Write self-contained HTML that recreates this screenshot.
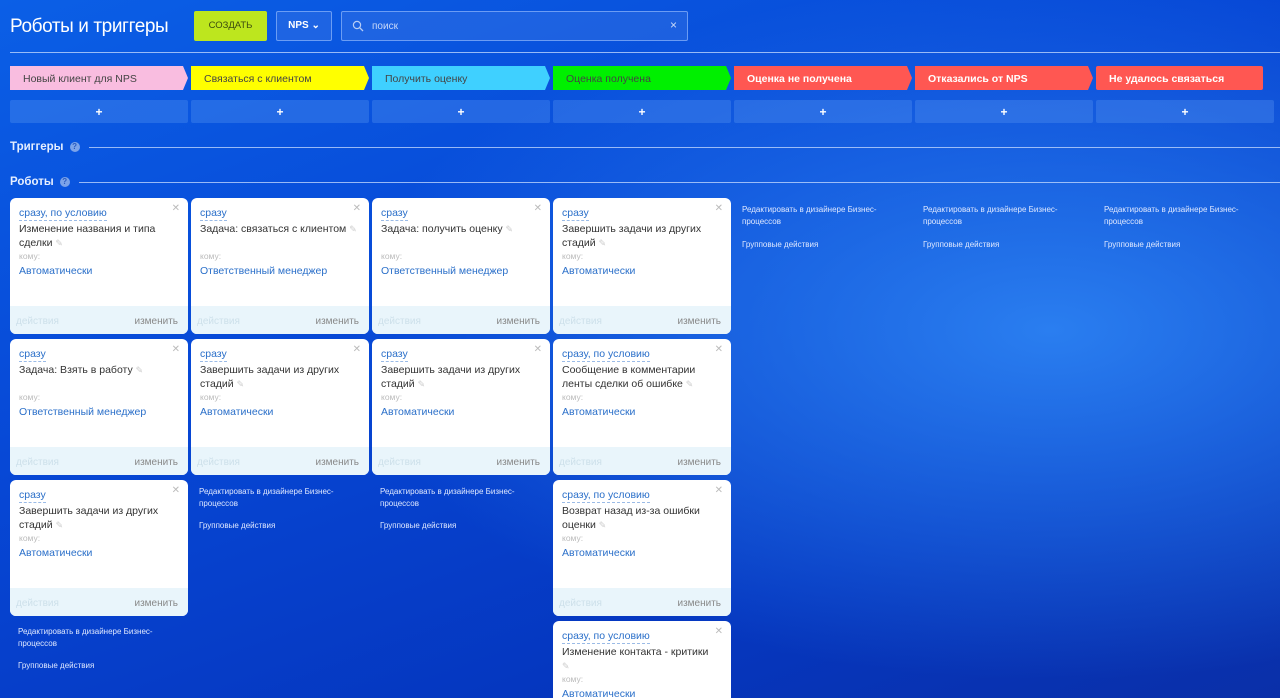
<!DOCTYPE html>
<html><head><meta charset="utf-8"><style>
*{margin:0;padding:0;box-sizing:border-box}
html{width:1280px;height:698px;overflow:hidden}
body{width:1280px;height:698px;overflow:hidden;font-family:"Liberation Sans",sans-serif;position:relative;
background:radial-gradient(ellipse 700px 350px at 1050px 330px,#2a7ef0 0%,rgba(30,110,235,0) 100%),linear-gradient(160deg,#0b5fe6 0%,#0748d6 40%,#0537c0 75%,#0a2fa8 100%);}
.a{position:absolute}
h1{position:absolute;left:10px;top:16px;font-weight:normal;font-size:19px;color:#fff;letter-spacing:-.4px}
.btn{position:absolute;top:11px;height:30px;border-radius:2px}
.hr{position:absolute;height:1px;background:rgba(200,220,255,.75)}
.st{position:absolute;top:66px;height:24px;font-size:10.5px;line-height:26px;padding-left:13px;clip-path:polygon(0 0,calc(100% - 5px) 0,100% 50%,calc(100% - 5px) 100%,0 100%)}
.pl{position:absolute;top:100px;height:23px;width:178px;background:rgba(90,150,240,.35);color:#fff;text-align:center;font-size:12px;line-height:24px;font-weight:bold;border-radius:2px}
.card{position:absolute;width:178px;height:136px;background:#fff;border-radius:6px;overflow:hidden}
.card .w{position:absolute;left:9px;top:9px;font-size:10.5px;color:#2a6fc9;border-bottom:1px dashed #9bbbe6;line-height:13px}
.card .x{position:absolute;right:8px;top:5px;font-size:10px;color:#bbb}
.card .t{position:absolute;left:9px;top:24px;width:160px;font-size:10.5px;line-height:14px;color:#333}
.card .t i{color:#ccc;font-style:normal;font-size:9px}
.card .k{position:absolute;left:9px;top:53px;font-size:8.5px;color:#bbb}
.card .v{position:absolute;left:9px;top:67px;font-size:10.5px;color:#2a6fc9}
.card .f{position:absolute;left:0;bottom:0;width:100%;height:28px;background:#e9f5fb}
.card .f span{position:absolute;top:10px;font-size:10px}
.lk{position:absolute;font-size:8px;color:#dfe8ff;line-height:12px;width:150px}
.sec{position:absolute;left:10px;font-size:11.5px;font-weight:bold;color:#e6efff}
.q{display:inline-block;width:10px;height:10px;border-radius:50%;background:rgba(200,215,240,.6);color:#2a5bc0;font-size:8px;text-align:center;line-height:10px;margin-left:6px;vertical-align:1px}
</style></head><body>
<h1>Роботы и триггеры</h1>
<div class="btn" style="left:194px;width:73px;background:#bde61e;color:#3b4a10;font-size:9.5px;text-align:center;line-height:30px">СОЗДАТЬ</div>
<div class="btn" style="left:276px;width:56px;border:1px solid rgba(160,195,255,.6);background:rgba(60,120,230,.4);color:#fff;font-size:10px;font-weight:bold;text-align:center;line-height:28px">NPS ⌄</div>
<div class="btn" style="left:341px;width:347px;border:1px solid rgba(160,195,255,.6);background:rgba(60,120,230,.4);">
<svg class="a" style="left:10px;top:8px" width="12" height="12" viewBox="0 0 12 12"><circle cx="5" cy="5" r="3.6" fill="none" stroke="#b7cdf5" stroke-width="1.2"/><path d="M7.6 7.6L11 11" stroke="#b7cdf5" stroke-width="1.3"/></svg>
<span class="a" style="left:30px;top:9px;font-size:10px;color:#c9d9f8">поиск</span>
<span class="a" style="right:10px;top:6px;font-size:12px;color:#c9d9f8">×</span></div>
<div class="hr" style="left:10px;top:52px;width:1270px"></div>

<div class="st" style="left:10px;width:178px;background:#f9bde0;color:#444">Новый клиент для NPS</div>
<div class="st" style="left:191px;width:178px;background:#ffff00;color:#444">Связаться с клиентом</div>
<div class="st" style="left:372px;width:178px;background:#3fd0ff;color:#444">Получить оценку</div>
<div class="st" style="left:553px;width:178px;background:#00f000;color:#444">Оценка получена</div>
<div class="st" style="left:734px;width:178px;background:#ff5752;color:#fff;font-weight:bold">Оценка не получена</div>
<div class="st" style="left:915px;width:178px;background:#ff5752;color:#fff;font-weight:bold">Отказались от NPS</div>
<div class="st" style="left:1096px;width:167px;background:#ff5752;color:#fff;font-weight:bold;clip-path:none;border-radius:2px">Не удалось связаться</div>

<div class="pl" style="left:10px">+</div><div class="pl" style="left:191px">+</div><div class="pl" style="left:372px">+</div><div class="pl" style="left:553px">+</div><div class="pl" style="left:734px">+</div><div class="pl" style="left:915px">+</div><div class="pl" style="left:1096px">+</div>

<div class="sec" style="top:141px">Триггеры<span class="q">?</span></div>
<div class="hr" style="left:89px;top:147px;width:1191px"></div>
<div class="sec" style="top:176px">Роботы<span class="q">?</span></div>
<div class="hr" style="left:79px;top:182px;width:1201px"></div>

<div class="card" style="left:10px;top:198px"><span class="w">сразу, по условию</span><span class="x">✕</span><div class="t">Изменение названия и типа сделки <i>✎</i></div><div class="k">кому:</div><div class="v">Автоматически</div><div class="f"><span style="left:6px;color:#cde0ea">действия</span><span style="right:10px;color:#888">изменить</span></div></div>
<div class="card" style="left:191px;top:198px"><span class="w">сразу</span><span class="x">✕</span><div class="t">Задача: связаться с клиентом <i>✎</i></div><div class="k">кому:</div><div class="v">Ответственный менеджер</div><div class="f"><span style="left:6px;color:#cde0ea">действия</span><span style="right:10px;color:#888">изменить</span></div></div>
<div class="card" style="left:372px;top:198px"><span class="w">сразу</span><span class="x">✕</span><div class="t">Задача: получить оценку <i>✎</i></div><div class="k">кому:</div><div class="v">Ответственный менеджер</div><div class="f"><span style="left:6px;color:#cde0ea">действия</span><span style="right:10px;color:#888">изменить</span></div></div>
<div class="card" style="left:553px;top:198px"><span class="w">сразу</span><span class="x">✕</span><div class="t">Завершить задачи из других стадий <i>✎</i></div><div class="k">кому:</div><div class="v">Автоматически</div><div class="f"><span style="left:6px;color:#cde0ea">действия</span><span style="right:10px;color:#888">изменить</span></div></div>
<div class="card" style="left:10px;top:339px"><span class="w">сразу</span><span class="x">✕</span><div class="t">Задача: Взять в работу <i>✎</i></div><div class="k">кому:</div><div class="v">Ответственный менеджер</div><div class="f"><span style="left:6px;color:#cde0ea">действия</span><span style="right:10px;color:#888">изменить</span></div></div>
<div class="card" style="left:191px;top:339px"><span class="w">сразу</span><span class="x">✕</span><div class="t">Завершить задачи из других стадий <i>✎</i></div><div class="k">кому:</div><div class="v">Автоматически</div><div class="f"><span style="left:6px;color:#cde0ea">действия</span><span style="right:10px;color:#888">изменить</span></div></div>
<div class="card" style="left:372px;top:339px"><span class="w">сразу</span><span class="x">✕</span><div class="t">Завершить задачи из других стадий <i>✎</i></div><div class="k">кому:</div><div class="v">Автоматически</div><div class="f"><span style="left:6px;color:#cde0ea">действия</span><span style="right:10px;color:#888">изменить</span></div></div>
<div class="card" style="left:553px;top:339px"><span class="w">сразу, по условию</span><span class="x">✕</span><div class="t">Сообщение в комментарии ленты сделки об ошибке <i>✎</i></div><div class="k">кому:</div><div class="v">Автоматически</div><div class="f"><span style="left:6px;color:#cde0ea">действия</span><span style="right:10px;color:#888">изменить</span></div></div>
<div class="card" style="left:10px;top:480px"><span class="w">сразу</span><span class="x">✕</span><div class="t">Завершить задачи из других стадий <i>✎</i></div><div class="k">кому:</div><div class="v">Автоматически</div><div class="f"><span style="left:6px;color:#cde0ea">действия</span><span style="right:10px;color:#888">изменить</span></div></div>
<div class="card" style="left:553px;top:480px"><span class="w">сразу, по условию</span><span class="x">✕</span><div class="t">Возврат назад из-за ошибки оценки <i>✎</i></div><div class="k">кому:</div><div class="v">Автоматически</div><div class="f"><span style="left:6px;color:#cde0ea">действия</span><span style="right:10px;color:#888">изменить</span></div></div>
<div class="card" style="left:553px;top:621px;height:77px;border-radius:6px 6px 0 0"><span class="w">сразу, по условию</span><span class="x">✕</span><div class="t">Изменение контакта - критики<br><i>✎</i></div><div class="k">кому:</div><div class="v">Автоматически</div></div>

<div class="lk" style="left:742px;top:204px">Редактировать в дизайнере Бизнес-процессов</div><div class="lk" style="left:742px;top:239px">Групповые действия</div>
<div class="lk" style="left:923px;top:204px">Редактировать в дизайнере Бизнес-процессов</div><div class="lk" style="left:923px;top:239px">Групповые действия</div>
<div class="lk" style="left:1104px;top:204px">Редактировать в дизайнере Бизнес-процессов</div><div class="lk" style="left:1104px;top:239px">Групповые действия</div>
<div class="lk" style="left:199px;top:486px">Редактировать в дизайнере Бизнес-процессов</div><div class="lk" style="left:199px;top:520px">Групповые действия</div>
<div class="lk" style="left:380px;top:486px">Редактировать в дизайнере Бизнес-процессов</div><div class="lk" style="left:380px;top:520px">Групповые действия</div>
<div class="lk" style="left:18px;top:626px">Редактировать в дизайнере Бизнес-процессов</div><div class="lk" style="left:18px;top:660px">Групповые действия</div>
</body></html>
